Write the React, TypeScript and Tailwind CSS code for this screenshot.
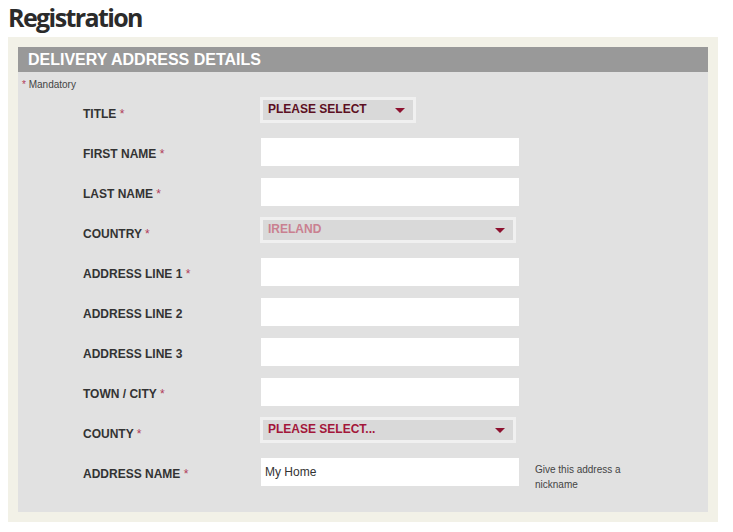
const Star = () => <span className="text-[#b03a5a] font-normal">*</span>;

type Row =
  | { label: string; req: boolean; kind: "input"; value?: string; hint?: boolean }
  | { label: string; req: boolean; kind: "select"; value: string; width: string; color: string };

const rows: Row[] = [
  { label: "TITLE", req: true, kind: "select", value: "PLEASE SELECT", width: "w-[156px]", color: "text-[#5c0f22]" },
  { label: "FIRST NAME", req: true, kind: "input" },
  { label: "LAST NAME", req: true, kind: "input" },
  { label: "COUNTRY", req: true, kind: "select", value: "IRELAND", width: "w-[256px]", color: "text-[#c98090]" },
  { label: "ADDRESS LINE 1", req: true, kind: "input" },
  { label: "ADDRESS LINE 2", req: false, kind: "input" },
  { label: "ADDRESS LINE 3", req: false, kind: "input" },
  { label: "TOWN / CITY", req: true, kind: "input" },
  { label: "COUNTY", req: true, kind: "select", value: "PLEASE SELECT...", width: "w-[256px]", color: "text-[#a3163a]" },
  { label: "ADDRESS NAME", req: true, kind: "input", value: "My Home", hint: true },
];

function Select({ value, width, color }: { value: string; width: string; color: string }) {
  return (
    <div className={`${width} mt-[5px] h-[26px] border-[3px] border-[#f0f0f0] bg-[#d9d9d9] flex items-center justify-between pl-[5px] pr-[8px]`}>
      <span className={`text-[12px] leading-[14px] mb-[2px] font-bold ${color}`}>{value}</span>
      <svg width="10" height="5" viewBox="0 0 10 5">
        <path d="M0 0h10L5 5z" fill="#8e1230" />
      </svg>
    </div>
  );
}

export default function App() {
  return (
    <div className="w-[733px] h-[532px] bg-white font-['Liberation_Sans',Arial,sans-serif]">
      <h1 className="px-[8px] h-[37px] text-[25px] leading-[34px] font-bold text-[#2b2b2b] tracking-[-1.6px] font-['Open_Sans',sans-serif]">
        Registration
      </h1>
      <div className="mx-[8px] w-[710px] bg-[#f2f1e7] p-[10px]">
        <div className="bg-[#e1e1e1] pb-[20px]">
          <div className="h-[25px] bg-[#999999] px-[10px] flex items-center text-white font-bold text-[16px]">
            DELIVERY ADDRESS DETAILS
          </div>
          <div className="px-[4px] pt-[7px] h-[20px] text-[10px] leading-[12px] text-[#444]">
            <Star /> Mandatory
          </div>
          <div className="flex flex-col">
            {rows.map((r) => (
              <div key={r.label} className="h-[40px] flex items-start">
                <div className="w-[242px] pl-[65px] pt-[15px] text-[12px] leading-[14px] font-bold text-[#333]">
                  {r.label} {r.req && <Star />}
                </div>
                {r.kind === "select" ? (
                  <Select value={r.value} width={r.width} color={r.color} />
                ) : (
                  <div className="w-[258px] h-[28px] mt-[6px] bg-white ml-[1px] px-[4px] flex items-center text-[12px] text-[#333]">
                    {r.value}
                  </div>
                )}
                {r.kind === "input" && r.hint && (
                  <div className="ml-[16px] pt-[10px] w-[110px] text-[10px] leading-[15px] text-[#444]">
                    Give this address a nickname
                  </div>
                )}
              </div>
            ))}
          </div>
        </div>
      </div>
    </div>
  );
}
